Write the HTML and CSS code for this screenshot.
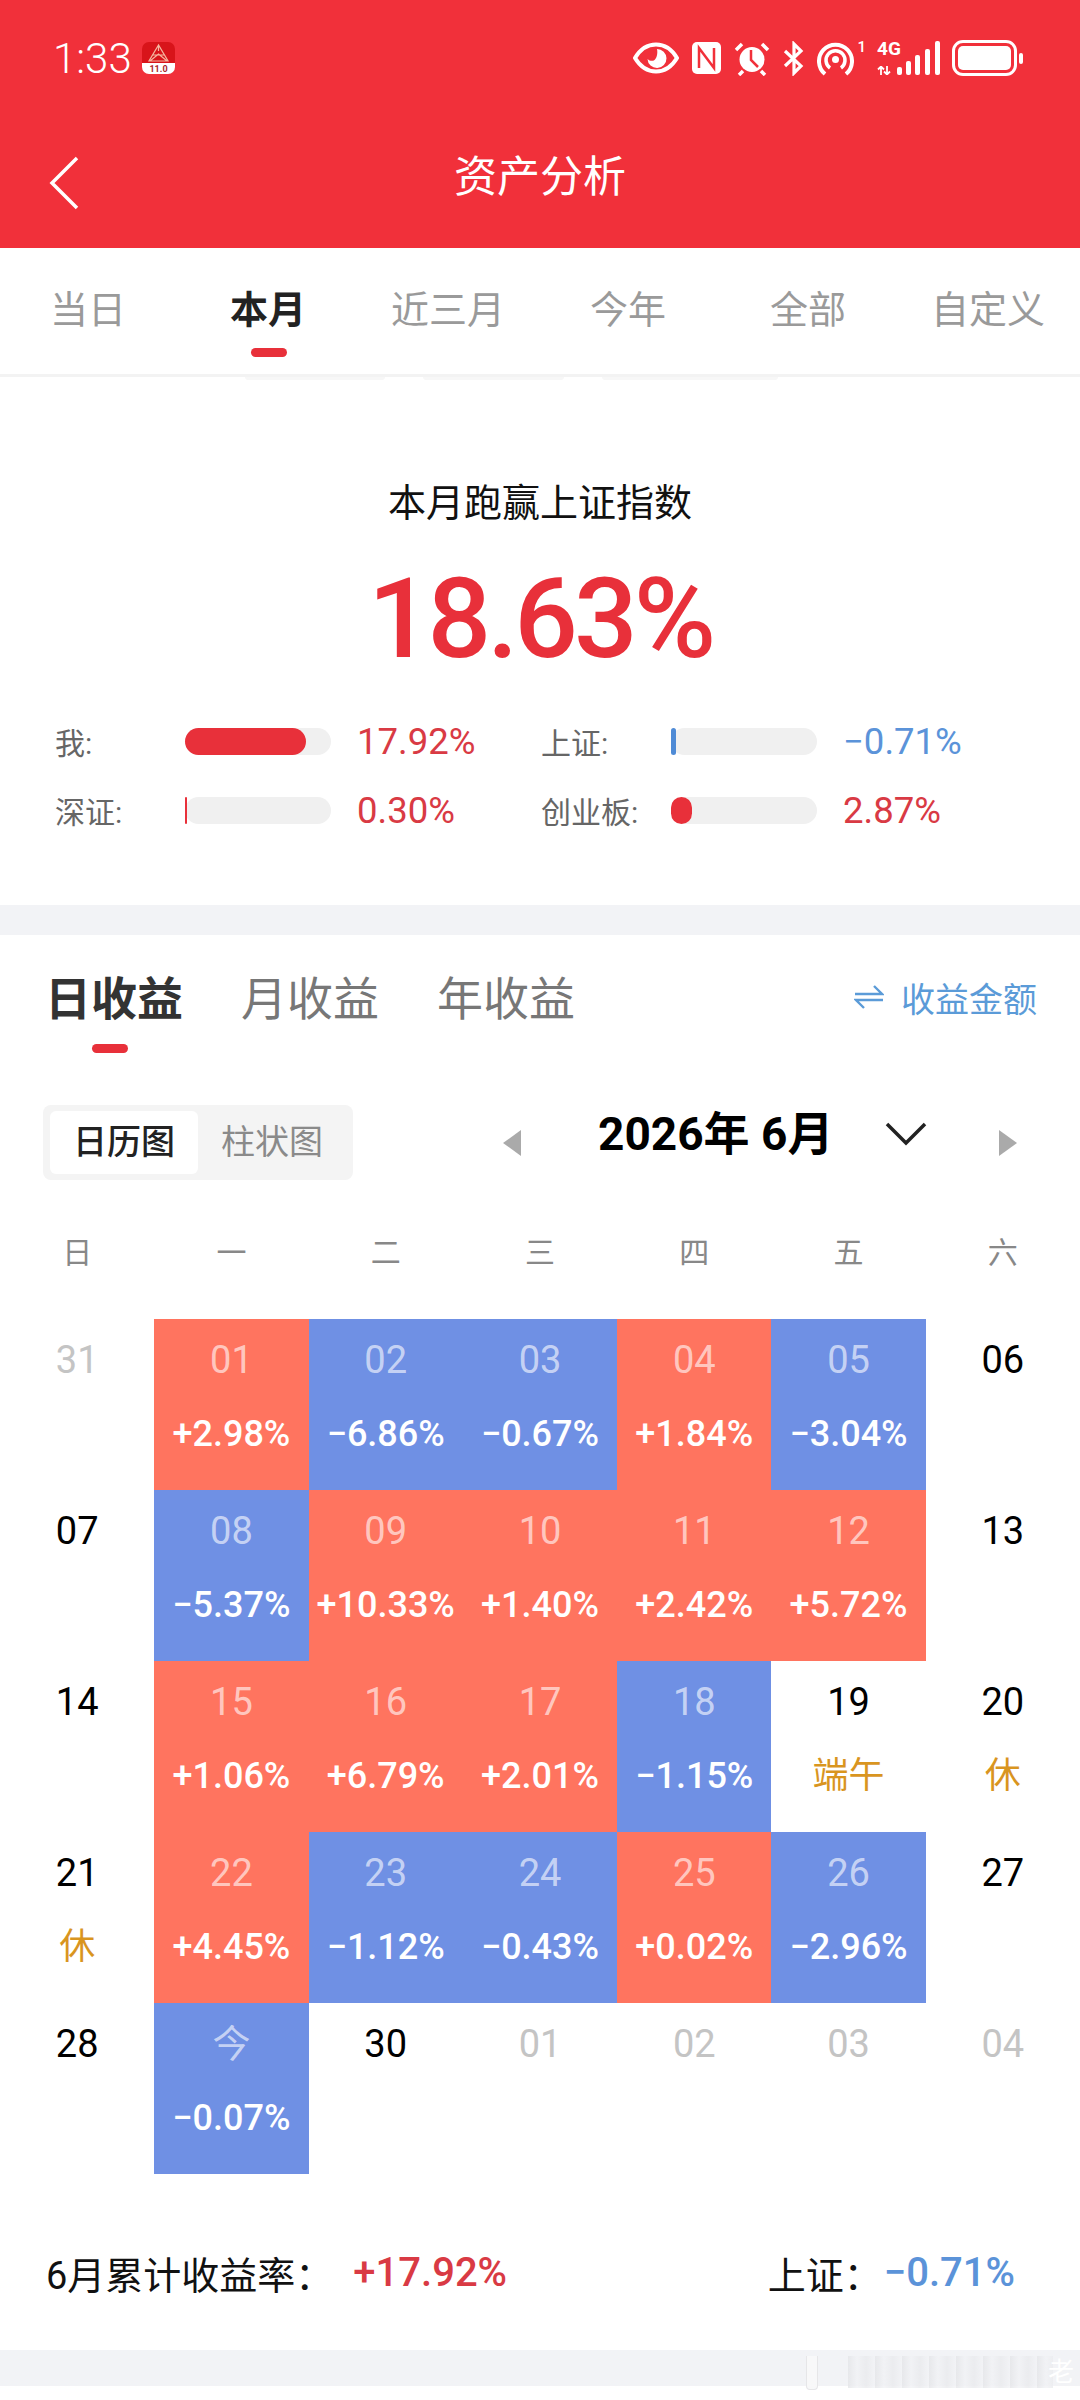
FILE: index.html
```html
<!DOCTYPE html>
<html lang="zh-CN">
<head>
    <meta charset="UTF-8">
    <meta name="viewport" content="width=device-width, initial-scale=1.0">
    <title>资产分析</title>
    <link rel="stylesheet" href="styles.css">
</head>
<body>
    <div class="page">
        <header class="header">
            <div class="status-bar">
                <div class="status-left">
                    <span class="clock">1:33</span>
                    <svg class="app-badge" width="33" height="32" viewBox="0 0 33 32">
                        <path d="M0 22V7a7 7 0 0 1 7-7h19a7 7 0 0 1 7 7v15z" fill="#d8141a"/>
                        <path d="M0 21h33v4a7 7 0 0 1-7 7H7a7 7 0 0 1-7-7z" fill="#fff"/>
                        <path d="M16.500 3L7 19h19zM16.500 3v6M11 13h11M8 19l8.500-7 8.500 7" fill="none" stroke="#f5b7a0" stroke-width="1.200"/>
                        <text class="badge-text" x="16.500" y="30">11.0</text>
                    </svg>
                </div>
                <div class="status-right">
                    <svg width="46" height="32" viewBox="0 0 46 32">
                        <path d="M2 16C8 6 15 2.500 23 2.500S38 6 44 16c-6 10-13 13.500-21 13.500S8 26 2 16z" fill="none" stroke="#fff" stroke-width="4"/>
                        <path d="M24 7a9.500 9.500 0 1 1-9.500 10c2 2 5 2.500 7 1s3.500-6 2.500-11z" fill="#fff"/>
                    </svg>
                    <svg width="29" height="32" viewBox="0 0 29 32">
                        <rect width="29" height="32" rx="5" fill="#fff"/>
                        <path d="M7 26V6l15 20V6" fill="none" stroke="#f1303a" stroke-width="2.500"/>
                    </svg>
                    <svg width="36" height="35" viewBox="0 0 36 35">
                        <circle cx="18" cy="18.500" r="12.500" fill="#fff"/>
                        <path d="M17 9v10l7 7" fill="none" stroke="#f1303a" stroke-width="2.500"/>
                        <path d="M2 9l6-6M34 9l-6-6M9 30l-4 4M27 30l4 4" stroke="#fff" stroke-width="3.500"/>
                    </svg>
                    <svg width="21" height="35" viewBox="0 0 21 35">
                        <path d="M2 10l16 15-7 7V3l7 7L2 25" fill="none" stroke="#fff" stroke-width="3.200"/>
                    </svg>
                    <span class="hotspot">
                        <svg width="37" height="35" viewBox="0 0 37 35">
                            <path d="M8 33A16.500 16.500 0 1 1 29 33" fill="none" stroke="#fff" stroke-width="4"/>
                            <path d="M13 27a9.500 9.500 0 1 1 11 0" fill="none" stroke="#fff" stroke-width="3.500"/>
                            <circle cx="18.500" cy="18.500" r="3.500" fill="#fff"/>
                        </svg>
                        <span class="sim-no">1</span>
                    </span>
                    <span class="signal">
                        <span class="net">4G</span>
                        <svg class="updown" width="15" height="9" viewBox="0 0 15 9">
                            <path d="M4 9V1M1 3.500L4 .5l3 3M10 0v8M7 5.500l3 3 3-3" fill="none" stroke="#fff" stroke-width="1.800"/>
                        </svg>
                        <span class="bar b1"></span>
                        <span class="bar b2"></span>
                        <span class="bar b3"></span>
                        <span class="bar b4"></span>
                        <span class="bar b5"></span>
                    </span>
                    <span class="battery"><span class="battery-fill"></span></span>
                    <span class="battery-tip"></span>
                </div>
            </div>
            <div class="nav-bar">
                <svg class="back" width="30" height="54" viewBox="0 0 30 54">
                    <path d="M28 2L3 27l25 25" fill="none" stroke="#fff" stroke-width="3.500"/>
                </svg>
                <span class="nav-title">资产分析</span>
            </div>
        </header>

        <nav class="range-tabs">
            <a class="range-tab">当日</a>
            <a class="range-tab active">本月</a>
            <a class="range-tab">近三月</a>
            <a class="range-tab">今年</a>
            <a class="range-tab">全部</a>
            <a class="range-tab">自定义</a>
        </nav>
        <div class="tabs-shadow">
            <span class="peek p1"></span>
            <span class="peek p2"></span>
            <span class="peek p3"></span>
        </div>

        <section class="summary">
            <div class="summary-title">本月跑赢上证指数</div>
            <div class="summary-value">18.63%</div>
            <div class="compare">
                <div class="compare-row">
                    <span class="compare-label">我:</span>
                    <span class="track"><span class="fill red" style="width: 83%"></span></span>
                    <span class="compare-value red-text">17.92%</span>
                </div>
                <div class="compare-row">
                    <span class="compare-label">上证:</span>
                    <span class="track"><span class="fill blue" style="width: 5px"></span></span>
                    <span class="compare-value blue-text">−0.71%</span>
                </div>
                <div class="compare-row">
                    <span class="compare-label">深证:</span>
                    <span class="track"><span class="fill red" style="width: 2px"></span></span>
                    <span class="compare-value red-text">0.30%</span>
                </div>
                <div class="compare-row">
                    <span class="compare-label">创业板:</span>
                    <span class="track"><span class="fill red" style="width: 21px"></span></span>
                    <span class="compare-value red-text">2.87%</span>
                </div>
            </div>
        </section>

        <div class="band"></div>

        <section class="returns">
            <div class="returns-head">
                <a class="returns-tab active">日收益</a>
                <a class="returns-tab">月收益</a>
                <a class="returns-tab">年收益</a>
                <a class="switch">
                    <svg width="30" height="26" viewBox="0 0 30 26">
                        <path d="M1 10h27L20 2M29 16H2l8 8" fill="none" stroke="#5b9bd8" stroke-width="2.400"/>
                    </svg>
                    收益金额
                </a>
            </div>

            <div class="toolbar">
                <div class="toggle">
                    <span class="toggle-item active">日历图</span>
                    <span class="toggle-item">柱状图</span>
                </div>
                <div class="month-picker">
                    <span class="tri tri-left"></span>
                    <span class="month">2026年 6月</span>
                    <svg class="month-down" width="42" height="24" viewBox="0 0 42 24">
                        <path d="M2 2l19 19L40 2" fill="none" stroke="#222" stroke-width="3.500"/>
                    </svg>
                    <span class="tri tri-right"></span>
                </div>
            </div>

            <div class="weekdays">
                <span>日</span><span>一</span><span>二</span><span>三</span><span>四</span><span>五</span><span>六</span>
            </div>

            <div class="calendar">
                <div class="day muted"><b>31</b></div>
                <div class="day up"><b>01</b><i>+2.98%</i></div>
                <div class="day down"><b>02</b><i>−6.86%</i></div>
                <div class="day down"><b>03</b><i>−0.67%</i></div>
                <div class="day up"><b>04</b><i>+1.84%</i></div>
                <div class="day down"><b>05</b><i>−3.04%</i></div>
                <div class="day"><b>06</b></div>

                <div class="day"><b>07</b></div>
                <div class="day down"><b>08</b><i>−5.37%</i></div>
                <div class="day up"><b>09</b><i>+10.33%</i></div>
                <div class="day up"><b>10</b><i>+1.40%</i></div>
                <div class="day up"><b>11</b><i>+2.42%</i></div>
                <div class="day up"><b>12</b><i>+5.72%</i></div>
                <div class="day"><b>13</b></div>

                <div class="day"><b>14</b></div>
                <div class="day up"><b>15</b><i>+1.06%</i></div>
                <div class="day up"><b>16</b><i>+6.79%</i></div>
                <div class="day up"><b>17</b><i>+2.01%</i></div>
                <div class="day down"><b>18</b><i>−1.15%</i></div>
                <div class="day"><b>19</b><em>端午</em></div>
                <div class="day"><b>20</b><em>休</em></div>

                <div class="day"><b>21</b><em>休</em></div>
                <div class="day up"><b>22</b><i>+4.45%</i></div>
                <div class="day down"><b>23</b><i>−1.12%</i></div>
                <div class="day down"><b>24</b><i>−0.43%</i></div>
                <div class="day up"><b>25</b><i>+0.02%</i></div>
                <div class="day down"><b>26</b><i>−2.96%</i></div>
                <div class="day"><b>27</b></div>

                <div class="day"><b>28</b></div>
                <div class="day down"><b>今</b><i>−0.07%</i></div>
                <div class="day"><b>30</b></div>
                <div class="day muted"><b>01</b></div>
                <div class="day muted"><b>02</b></div>
                <div class="day muted"><b>03</b></div>
                <div class="day muted"><b>04</b></div>
            </div>

            <div class="month-total">
                <span class="total-label">6月累计收益率：</span>
                <span class="total-value red-text">+17.92%</span>
                <span class="total-label index-label">上证：</span>
                <span class="total-value blue-text">−0.71%</span>
            </div>
        </section>

        <div class="band bottom-band"></div>

        <!-- watermark smeared over the bottom right corner -->
        <div class="watermark">
            <span class="wm-pill"></span>
            <span class="wm-stripes"></span>
            <span class="wm-char">老</span>
        </div>
    </div>
</body>
</html>
```

FILE: styles.css
```css
body {
    margin: 0;
    background-color: #fff;
    font-family: "Roboto", "Noto Sans CJK SC", sans-serif;
    color: #222;
}
.page {
    width: 1080px;
    height: 2400px;
    overflow: hidden;
    position: relative;
}
a {
    text-decoration: none;
}

/* red header */
.header {
    height: 248px;
    background-color: #f1303a;
    color: #fff;
}
.status-bar {
    height: 116px;
    padding: 0 57px 0 53px;
    display: flex;
    justify-content: space-between;
    align-items: center;
}
.status-left,
.status-right {
    display: flex;
    align-items: center;
}
.clock {
    font-size: 42px;
    font-weight: 300;
    margin-right: 10px;
}
.badge-text {
    font-family: "Roboto", sans-serif;
    font-size: 9px;
    font-weight: 700;
    fill: #a8262a;
    text-anchor: middle;
}
.status-right {
    gap: 13px;
}
.hotspot {
    display: flex;
    align-items: flex-start;
    gap: 3px;
}
.sim-no {
    font-size: 15px;
    font-weight: 500;
    line-height: 13px;
}
.signal {
    width: 62px;
    height: 34px;
    margin-left: -2px;
    position: relative;
}
.net {
    position: absolute;
    left: 0;
    top: -1px;
    font-size: 19px;
    line-height: 18px;
    font-weight: 700;
}
.updown {
    position: absolute;
    left: 0;
    bottom: 0;
}
.bar {
    position: absolute;
    bottom: 0;
    width: 5px;
    background-color: #fff;
    border-radius: 2px;
}
.b1 { left: 20px; height: 8px; }
.b2 { left: 29px; height: 14px; }
.b3 { left: 38px; height: 20px; }
.b4 { left: 48px; height: 26px; }
.b5 { left: 58px; height: 34px; }
.battery {
    width: 65px;
    height: 36px;
    border: 3px solid #fff;
    border-radius: 11px;
    padding: 3px;
    display: block;
    box-sizing: border-box;
}
.battery-fill {
    display: block;
    height: 100%;
    background-color: #fff;
    border-radius: 5px;
}
.battery-tip {
    width: 4px;
    height: 11px;
    background-color: #fff;
    border-radius: 2px;
    margin-left: -11px;
}
.nav-bar {
    height: 132px;
    position: relative;
    display: flex;
    justify-content: center;
    padding-top: 31px;
    box-sizing: border-box;
}
.nav-title {
    font-size: 43px;
    line-height: 60px;
}
.back {
    position: absolute;
    left: 49px;
    top: 40px;
}

/* range tabs */
.range-tabs {
    display: grid;
    grid-template-columns: repeat(6, 180px);
    height: 126px;
    margin-left: -2px;
}
.range-tab {
    text-align: center;
    font-size: 38px;
    line-height: 50px;
    padding-top: 37px;
    color: #9a9a9a;
    position: relative;
}
.range-tab.active {
    color: #222;
    font-weight: 700;
}
.range-tab.active::after {
    content: "";
    position: absolute;
    left: 73px;
    top: 100px;
    width: 36px;
    height: 9px;
    border-radius: 5px;
    background-color: #e8303a;
}
.tabs-shadow {
    height: 3px;
    background-color: #f3f3f3;
    position: relative;
}
.peek {
    position: absolute;
    top: 3px;
    height: 3px;
    background-color: #f7f7f7;
    border-radius: 0 0 4px 4px;
}
.p1 { left: 245px; width: 140px; }
.p2 { left: 423px; width: 141px; }
.p3 { left: 602px; width: 176px; }

/* summary */
.summary {
    height: 528px;
    box-sizing: border-box;
    padding-top: 99px;
}
.summary-title {
    text-align: center;
    font-size: 38px;
    line-height: 54px;
    color: #111;
}
.summary-value {
    text-align: center;
    font-size: 112px;
    font-weight: 500;
    line-height: 130px;
    margin-top: 24px;
    color: #e8303a;
    letter-spacing: -4px;
}
.compare {
    display: grid;
    grid-template-columns: 486px 486px;
    row-gap: 27px;
    padding-left: 55px;
    margin-top: 36px;
}
.compare-row {
    display: flex;
    align-items: center;
    height: 42px;
}
.compare-label {
    width: 130px;
    font-size: 30px;
    color: #666;
}
.track {
    width: 146px;
    height: 27px;
    border-radius: 14px;
    background-color: #f0f0f0;
}
.fill {
    display: block;
    height: 100%;
    border-radius: 14px;
}
.fill.red {
    background-color: #e8303a;
}
.fill.blue {
    background-color: #4f8bd6;
}
.compare-value {
    margin-left: 26px;
    font-size: 36.5px;
}
.red-text {
    color: #d93a44;
}
.blue-text {
    color: #5b93d9;
}
.band {
    height: 30px;
    background-color: #f2f3f6;
}

/* returns */
.returns {
    height: 1415px;
    position: relative;
}
.returns-head {
    display: flex;
    align-items: center;
    height: 120px;
    padding: 0 43px 0 45px;
    gap: 58px;
}
.returns-tab {
    font-size: 46px;
    color: #777;
    position: relative;
}
.returns-tab.active {
    color: #333;
    font-weight: 700;
}
.returns-tab.active::after {
    content: "";
    position: absolute;
    left: 47px;
    top: 82px;
    width: 36px;
    height: 9px;
    border-radius: 5px;
    background-color: #e8303a;
}
.switch {
    margin-left: auto;
    margin-top: 4px;
    display: flex;
    align-items: center;
    gap: 17px;
    font-size: 34px;
    color: #5b9bd8;
}
.toolbar {
    display: flex;
    align-items: center;
    padding-left: 43px;
    margin-top: 50px;
}
.toggle {
    display: flex;
    width: 310px;
    height: 75px;
    box-sizing: border-box;
    padding: 6px 7px;
    background-color: #f4f4f4;
    border-radius: 8px;
}
.toggle-item {
    flex: 1;
    text-align: center;
    font-size: 34px;
    line-height: 63px;
    color: #8a8a8a;
    border-radius: 6px;
}
.toggle-item.active {
    flex: none;
    width: 148px;
    background-color: #fff;
    color: #222;
    font-weight: 500;
}
.month-picker {
    display: flex;
    align-items: center;
    margin-left: 150px;
}
.tri {
    width: 0;
    height: 0;
    border-top: 13px solid transparent;
    border-bottom: 13px solid transparent;
}
.tri-left {
    border-right: 18px solid #aaa;
    margin-right: 77px;
}
.tri-right {
    border-left: 18px solid #aaa;
    margin-left: 72px;
}
.month {
    font-size: 46px;
    font-weight: 700;
    color: #000;
    margin-top: -26px;
    width: 231px;
    white-space: nowrap;
}
.month-down {
    margin-left: 56px;
    margin-top: -18px;
}
.weekdays {
    display: grid;
    grid-template-columns: repeat(7, 1fr);
    margin-top: 48px;
    text-align: center;
    font-size: 30px;
    line-height: 50px;
    color: #888;
}
.calendar {
    display: grid;
    grid-template-columns: repeat(7, 1fr);
    grid-auto-rows: 171px;
    margin-top: 41px;
}
.day {
    display: flex;
    flex-direction: column;
    align-items: center;
    color: #000;
    padding-top: 17px;
    box-sizing: border-box;
}
.day b {
    font-size: 38px;
    font-weight: 400;
    line-height: 48px;
}
.day i,
.day em {
    font-style: normal;
    margin-top: 26px;
    line-height: 48px;
    font-size: 36px;
    white-space: nowrap;
}
.day i {
    font-weight: 500;
}
.day em {
    color: #d9951f;
}
.day.muted {
    color: #c4c4c4;
}
.day.up,
.day.down {
    color: #fff;
}
.day.up b,
.day.down b {
    color: rgba(255, 255, 255, 0.62);
}
.day.up {
    background-color: #ff745f;
}
.day.down {
    background-color: #6f90e4;
}
.month-total {
    display: flex;
    align-items: center;
    padding: 0 65px 0 46px;
    margin-top: 71px;
    height: 54px;
}
.total-label {
    font-size: 38px;
    color: #111;
}
.total-value {
    font-size: 40px;
    font-weight: 500;
    margin-left: 2px;
}
.total-value.red-text {
    margin-left: 20px;
}
.index-label {
    margin-left: auto;
}
.bottom-band {
    height: 36px;
}

/* watermark */
.watermark {
    position: absolute;
    left: 806px;
    top: 2354px;
    width: 268px;
    height: 36px;
}
.wm-pill {
    position: absolute;
    left: 0;
    top: 2px;
    width: 12px;
    height: 34px;
    background-color: #f8f8f9;
    border: 1px solid #e6e6e8;
    border-top: none;
    border-radius: 0 0 4px 4px;
    box-sizing: border-box;
}
.wm-stripes {
    position: absolute;
    left: 42px;
    top: 2px;
    width: 205px;
    height: 32px;
    background-image: repeating-linear-gradient(90deg, #e4e5e8 0, #f1f2f5 9px, #e9eaed 18px, #f2f3f6 27px);
    opacity: 0.8;
}
.wm-char {
    position: absolute;
    right: 0;
    top: 0;
    font-size: 26px;
    line-height: 36px;
    color: #fff;
}
```
